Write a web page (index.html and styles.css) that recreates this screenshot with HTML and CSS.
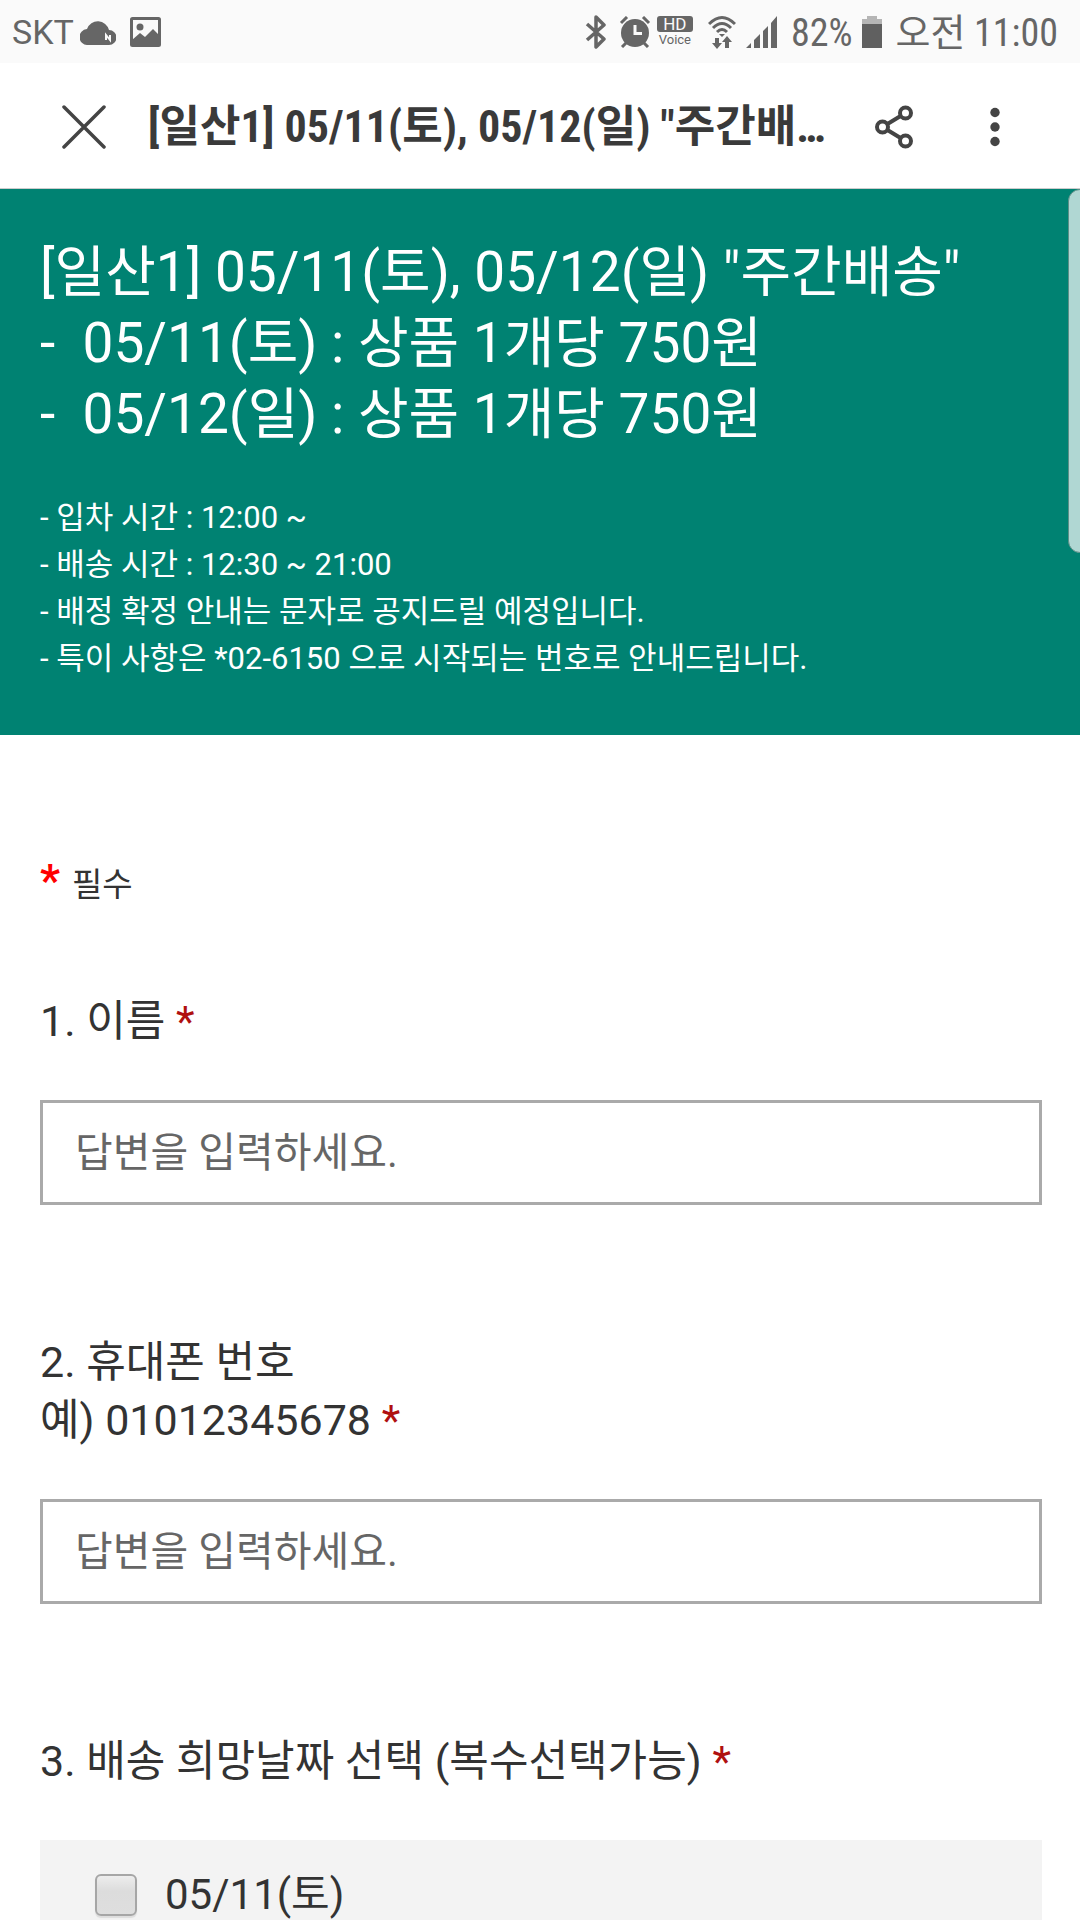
FILE: index.html
```html
<!DOCTYPE html>
<html lang="ko">
<head>
<meta charset="utf-8">
<meta name="viewport" content="width=device-width, initial-scale=1">
<title>[일산1] 05/11(토), 05/12(일) "주간배송"</title>
<link rel="stylesheet" href="styles.css">
</head>
<body>
<div class="status-bar">
  <div class="status-group status-left">
    <span class="carrier">SKT</span>
    <svg class="icon-cloud" width="36" height="26" viewBox="0 0 36 26"><path fill="#666" d="M8 26a8 8 0 0 1-1-16A11.500 11.500 0 0 1 29 11a7.500 7.500 0 0 1 0 15z"/><path d="M26 21v-5l4 5v-5" fill="none" stroke="#fafafa" stroke-width="2"/></svg>
    <svg class="icon-image" width="32" height="30" viewBox="0 0 32 30"><rect x="1.500" y="1.500" width="28" height="27" rx="1" fill="none" stroke="#666" stroke-width="3"/><circle cx="10" cy="10" r="3.500" fill="#666"/><path fill="#666" d="M2 23l8-7 5 4 8-8 7 7v9H2z"/></svg>
  </div>
  <div class="status-group status-right">
    <svg width="22" height="34" viewBox="0 0 22 34"><path d="M2 9l17 15-8 8V2l8 8L2 25" fill="none" stroke="#666" stroke-width="3.500" stroke-linejoin="round"/></svg>
    <svg class="icon-alarm" width="32" height="32" viewBox="0 0 32 32"><circle cx="16" cy="17" r="14" fill="#666"/><path d="M2 7l6-6M24 1l6 6M3 31l5-5M29 31l-5-5" stroke="#666" stroke-width="3"/><path d="M16 9v8.500h7" fill="none" stroke="#fafafa" stroke-width="3"/></svg>
    <span class="hd-voice"><span class="hd">HD</span><span class="voice">Voice</span></span>
    <svg class="icon-wifi" width="28" height="34" viewBox="0 0 28 34"><path d="M1 9q13-13 26 0M5 13q9-9 18 0M9 17q5-5 10 0" fill="none" stroke="#666" stroke-width="3"/><path fill="#666" d="M11 19h6l-3 3zM7 23h4v5h3l-5 6-5-6h3zM17 33v-6h-3l5-6 5 6h-3v6z"/></svg>
    <svg class="icon-signal" width="32" height="32" viewBox="0 0 32 32"><path fill="#666" d="M0 32l5-5v5zM8 32V24l6-6v14zM17 32V15l5-5v22zM25 32V7l6-7v32z"/></svg>
    <span class="battery-text">82%</span>
    <svg class="icon-battery" width="20" height="32" viewBox="0 0 20 32"><path fill="#b5b5b5" d="M5 0h10v3h5v6H0V3h5z"/><path fill="#606060" d="M0 8h20v24H0z"/></svg>
    <span class="clock">오전 11:00</span>
  </div>
</div>
<header class="app-bar">
  <button class="icon-button" type="button" aria-label="닫기"><svg width="44" height="44" viewBox="0 0 44 44"><path d="M2 2l40 40M42 2L2 42" stroke="#444" stroke-width="3.500" stroke-linecap="round"/></svg></button>
  <div class="app-title">[일산1] 05/11(토), 05/12(일) "주간배…</div>
  <button class="icon-button" type="button" aria-label="공유"><svg width="38" height="44" viewBox="0 0 38 44"><path d="M7.500 22L30.500 8M7.500 22l23 14" stroke="#444" stroke-width="4"/><g fill="#fff" stroke="#444" stroke-width="4"><circle cx="7.500" cy="22" r="5.500"/><circle cx="30.500" cy="8" r="5.500"/><circle cx="30.500" cy="36" r="5.500"/></g></svg></button>
  <button class="icon-button more" type="button" aria-label="더보기"><svg width="10" height="40" viewBox="0 0 10 40"><g fill="#444"><circle cx="5" cy="5.500" r="4.700"/><circle cx="5" cy="20" r="4.700"/><circle cx="5" cy="34.500" r="4.700"/></g></svg></button>
</header>
<section class="form-header">
  <h1 class="form-title">[일산1] 05/11(토), 05/12(일) "주간배송"
-  05/11(토) : 상품 1개당 750원
-  05/12(일) : 상품 1개당 750원</h1>
  <p class="form-description">- 입차 시간 : 12:00 ~
- 배송 시간 : 12:30 ~ 21:00
- 배정 확정 안내는 문자로 공지드릴 예정입니다.
- 특이 사항은 *02-6150 으로 시작되는 번호로 안내드립니다.</p>
  <div class="scroll-handle"></div>
</section>
<form class="form-body">
  <p class="required-note"><span class="required-star">*</span><span>필수</span></p>
  <div class="question">
    <label class="question-label" for="name">1. 이름 <span class="star">*</span></label>
    <input class="answer" id="name" type="text" placeholder="답변을 입력하세요.">
  </div>
  <div class="question">
    <label class="question-label" for="phone">2. 휴대폰 번호<br>예) 01012345678 <span class="star">*</span></label>
    <input class="answer" id="phone" type="text" placeholder="답변을 입력하세요.">
  </div>
  <fieldset class="question choices">
    <legend class="question-label">3. 배송 희망날짜 선택 (복수선택가능) <span class="star">*</span></legend>
    <div class="options">
      <label class="option"><input class="checkbox" type="checkbox"><span>05/11(토)</span></label>
    </div>
  </fieldset>
</form>
</body>
</html>
```
FILE: styles.css
```css
* { box-sizing: border-box; }

body {
  margin: 0;
  min-height: 100vh;
  display: flex;
  flex-direction: column;
  background: #fff;
  color: #333;
  font-family: Roboto, "Noto Sans CJK KR", sans-serif;
}

svg { display: block; flex: none; }

.status-bar {
  display: flex;
  justify-content: space-between;
  align-items: center;
  height: 63px;
  padding: 0 22px 0 12px;
  background: #fafafa;
  color: #666;
  font-size: 38px;
  line-height: 48px;
  white-space: nowrap;
}
.status-group { display: flex; align-items: center; }
.status-left { gap: 6px; }
.carrier { font-size: 34px; }
.icon-image { margin-left: 8px; }
.icon-alarm { margin-left: 12px; }
.hd-voice {
  display: flex;
  flex-direction: column;
  align-items: center;
  width: 36px;
  margin-left: 6px;
}
.hd {
  width: 36px;
  border-radius: 3px;
  background: #666;
  color: #fafafa;
  font-size: 17px;
  line-height: 16px;
  text-align: center;
}
.voice { font-size: 13px; line-height: 16px; }
.icon-wifi { margin-left: 15px; }
.icon-signal { margin-left: 10px; }
.battery-text { margin-left: 13px; }
.battery-text, .clock {
  padding-top: 2px;
  font-family: "Roboto Condensed", Roboto, "Noto Sans CJK KR", sans-serif;
}
.icon-battery { margin-left: 10px; }
.clock { margin-left: 13px; }

.app-bar {
  display: flex;
  align-items: center;
  height: 126px;
  padding: 2px 62px 0;
  border-bottom: 1px solid #ccc;
}
.icon-button {
  display: flex;
  padding: 0;
  border: 0;
  background: none;
}
.more { margin-left: 77px; margin-right: 18px; }
.app-title {
  flex: 1;
  min-width: 0;
  margin: 0 40px 0 42px;
  overflow: hidden;
  text-overflow: ellipsis;
  white-space: nowrap;
  color: #3a3a3a;
  font-family: "Roboto Condensed", Roboto, "Noto Sans CJK KR", sans-serif;
  font-size: 44px;
  font-weight: 700;
  line-height: 64px;
}

.form-header {
  position: relative;
  padding: 48px 40px 53px;
  overflow: hidden;
  background: #008272;
  color: #fff;
}
.form-title {
  margin: 0 0 44px;
  font-size: 55px;
  font-weight: 400;
  line-height: 71px;
  white-space: pre-wrap;
}
.form-description {
  margin: 0;
  font-size: 31px;
  line-height: 47px;
  white-space: pre-line;
}
.scroll-handle {
  position: absolute;
  top: 0;
  right: -12px;
  width: 24px;
  height: 364px;
  border: 1px solid #5f8f88;
  border-radius: 16px;
  background: #b0d7d3;
}

.form-body {
  padding: 122px 38px 0 40px;
}
.required-note {
  display: flex;
  align-items: baseline;
  gap: 12px;
  height: 48px;
  margin: 0;
  font-size: 33px;
  line-height: 48px;
}
.required-star {
  color: #f00;
  font-size: 44px;
  line-height: 48px;
  font-weight: 700;
}
.question {
  display: flex;
  flex-direction: column;
  margin-top: 87px;
}
.question-label {
  padding: 0;
  margin-bottom: 50px;
  font-size: 43px;
  line-height: 58px;
}
.star { color: #b01010; }
.answer {
  width: 100%;
  height: 105px;
  padding: 0 32px;
  border: 3px solid #aaa;
  border-radius: 0;
  background: #fff;
  color: #333;
  font: inherit;
  font-size: 41px;
}
.answer::placeholder { color: #666; opacity: 1; }
.question + .question { margin-top: 128px; }
.choices {
  min-width: 0;
  margin: 0;
  padding: 0;
  border: 0;
}
.options {
  padding: 30px 55px 0;
  background: #f3f3f3;
}
.option {
  display: flex;
  align-items: center;
  gap: 28px;
  font-size: 42px;
  line-height: 50px;
}
.checkbox {
  appearance: none;
  width: 42px;
  height: 42px;
  margin: 0;
  border: 2px solid #a6a6a6;
  border-radius: 6px;
  background: linear-gradient(#ededed, #dcdcdc 40%, #dedede);
  box-shadow: 0 2px 1px #ddd;
}
```
